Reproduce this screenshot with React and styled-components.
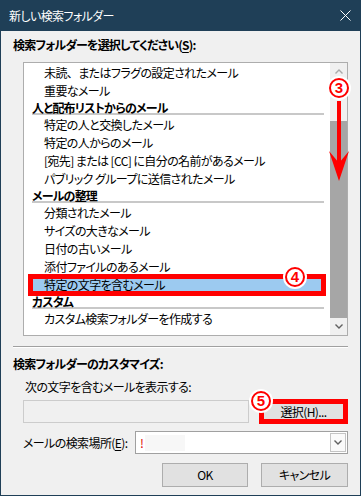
import React from "react";
import styled, { createGlobalStyle } from "styled-components";

const Global = createGlobalStyle`
  html, body { margin: 0; padding: 0; background: #f0f0f0; }
  body {
    font-family: "Noto Sans CJK JP", "Noto Sans", sans-serif;
    font-size: 12px;
    color: #000;
    font-feature-settings: "palt";
    letter-spacing: -0.6px;
  }
  * { box-sizing: border-box; }
`;

const Window = styled.div`
  width: 361px;
  height: 496px;
  border: 1px solid #1f3f57;
  border-top: none;
  background: #f0f0f0;
  display: flex;
  flex-direction: column;
  position: relative;
`;

const TitleBar = styled.div`
  height: 31px;
  flex: none;
  background: #1f3f57;
  color: #fff;
  display: flex;
  align-items: center;
  justify-content: space-between;
  padding: 0 9px 0 8px;
  font-size: 12px;
  line-height: 16px;
`;

const Body = styled.div`
  flex: 1;
  display: flex;
  flex-direction: column;
  padding: 0 12px;
`;

const Label = styled.div`
  height: 16px;
  line-height: 16px;
  white-space: nowrap;
  font-weight: ${(p) => (p.$bold ? 700 : 400)};
  letter-spacing: ${(p) => (p.$bold ? "-0.8px" : "-0.6px")};
  margin-top: ${(p) => p.$mt || 0}px;
  margin-left: ${(p) => p.$ml || 0}px;
`;

const U = styled.span`
  text-decoration: underline;
  text-underline-offset: 2px;
`;

const Wide = styled.span`
  font-feature-settings: normal;
`;

const ListBox = styled.div`
  position: relative;
  margin: 9px 0 0 10px;
  width: 325px;
  height: 274px;
  border: 1px solid #adadad;
  background: #fff;
  display: flex;
  flex: none;
`;

const List = styled.div`
  flex: 1;
  padding-top: 1px;
  display: flex;
  flex-direction: column;
`;

const Item = styled.div`
  position: relative;
  height: 18px;
  line-height: 18px;
  white-space: nowrap;
  padding-left: ${(p) => (p.$selected ? 16 : 20)}px;
  margin: 0 ${(p) => (p.$selected ? 4 : 0)}px;
  background: ${(p) => (p.$selected ? "#9ccaf0" : "transparent")};
`;

const Header = styled.div`
  height: 15px;
  line-height: 15px;
  margin: 0 6px 1px 8px;
  border-bottom: 2px solid #c8c8c8;
  font-weight: 700;
  letter-spacing: -0.8px;
  white-space: nowrap;
`;

const Scrollbar = styled.div`
  width: 17px;
  flex: none;
  background: #f0f0f0;
  display: flex;
  flex-direction: column;
`;

const ScrollButton = styled.div`
  height: 17px;
  flex: none;
  display: flex;
  align-items: center;
  justify-content: center;
`;

const TrackSpace = styled.div`
  height: 41px;
  flex: none;
`;

const Thumb = styled.div`
  flex: 1;
  background: #a6a6a6;
`;

const RedBox = styled.div`
  position: absolute;
  top: ${(p) => p.$t}px;
  left: ${(p) => p.$l}px;
  right: ${(p) => p.$r}px;
  bottom: ${(p) => p.$b}px;
  border: 5px solid #ff0000;
  pointer-events: none;
`;

const Badge = styled.div`
  position: absolute;
  left: ${(p) => p.$x - 12}px;
  top: ${(p) => p.$y - 12}px;
  width: 24px;
  height: 24px;
  border-radius: 50%;
  background: #fff;
  display: flex;
  align-items: center;
  justify-content: center;
  z-index: 2;
`;

const BadgeRing = styled.div`
  width: 20px;
  height: 20px;
  border-radius: 50%;
  border: 2px solid #ff0000;
  color: #ff0000;
  font-family: "Liberation Sans", Arial, sans-serif;
  font-weight: 700;
  font-size: 15px;
  line-height: 16px;
  letter-spacing: 0;
  text-align: center;
`;

const ArrowSvg = styled.svg`
  position: absolute;
  left: ${(p) => p.$x}px;
  top: ${(p) => p.$y}px;
`;

const Separator = styled.div`
  margin-top: 10px;
  height: 2px;
  border-top: 1px solid #a0a0a0;
  border-bottom: 1px solid #fff;
  flex: none;
`;

const Row = styled.div`
  display: flex;
  align-items: center;
  margin-top: ${(p) => p.$mt || 0}px;
  margin-left: ${(p) => p.$ml || 0}px;
  justify-content: ${(p) => p.$justify || "flex-start"};
  gap: ${(p) => p.$gap || 0}px;
`;

const TextBox = styled.div`
  width: 226px;
  height: 23px;
  border: 1px solid #cccccc;
  background: #f0f0f0;
`;

const ButtonWrap = styled.div`
  position: relative;
  margin-left: ${(p) => p.$ml || 0}px;
`;

const Button = styled.div`
  width: ${(p) => p.$w}px;
  height: ${(p) => p.$h}px;
  background: #e1e1e1;
  border: 1px solid #adadad;
  display: flex;
  align-items: center;
  justify-content: center;
  white-space: nowrap;
  line-height: 16px;
`;

const Combo = styled.div`
  margin-left: auto;
  width: 213px;
  height: 23px;
  border: 1px solid #a0a0a0;
  background: #fff;
  display: flex;
  align-items: center;
  padding: 0 1px 0 4px;
`;

const Bang = styled.span`
  color: #e00000;
  font-size: 12px;
  line-height: 16px;
`;

const Redacted = styled.span`
  width: 40px;
  height: 16px;
  background: #f7f7f7;
  margin-left: 2px;
`;

const DropBtn = styled.div`
  margin-left: auto;
  width: 16px;
  height: 19px;
  border: 1px solid #c4c4c4;
  background: #fafafa;
  display: flex;
  align-items: center;
  justify-content: center;
`;

const Chevron = ({ color = "#606060", up = false }) => (
  <svg width="8" height="5" viewBox="0 0 8 5">
    <path
      d={up ? "M0.5 4.5 L4 1 L7.5 4.5" : "M0.5 0.5 L4 4 L7.5 0.5"}
      fill="none"
      stroke={color}
      strokeWidth="1.4"
    />
  </svg>
);

const CloseIcon = () => (
  <svg width="11" height="11" viewBox="0 0 11 11">
    <path d="M0.5 0.5 L10.5 10.5 M10.5 0.5 L0.5 10.5" stroke="#fff" strokeWidth="1" fill="none" />
  </svg>
);

const CircleNum = ({ x, y, n }) => (
  <Badge $x={x} $y={y}>
    <BadgeRing>{n}</BadgeRing>
  </Badge>
);

const rows = [
  { t: <>未読<Wide>、</Wide>またはフラグの設定されたメール</> },
  { t: "重要なメール" },
  { h: "人と配布リストからのメール" },
  { t: "特定の人と交換したメール" },
  { t: "特定の人からのメール" },
  { t: "[宛先] または [CC] に自分の名前があるメール" },
  { t: "パブリック グループに送信されたメール" },
  { h: "メールの整理" },
  { t: "分類されたメール" },
  { t: "サイズの大きなメール" },
  { t: "日付の古いメール" },
  { t: "添付ファイルのあるメール" },
  { t: "特定の文字を含むメール", sel: true },
  { h: "カスタム" },
  { t: "カスタム検索フォルダーを作成する" },
];

export default function App() {
  return (
    <>
      <Global />
      <Window>
        <TitleBar>
          <span>新しい検索フォルダー</span>
          <CloseIcon />
        </TitleBar>
        <Body>
          <Label $bold $mt={6}>
            検索フォルダーを選択してください(<U>S</U>):
          </Label>
          <ListBox>
            <List>
              {rows.map((r, i) =>
                r.h ? (
                  <Header key={i}>{r.h}</Header>
                ) : (
                  <Item key={i} $selected={r.sel}>
                    {r.t}
                    {r.sel && (
                      <>
                        <RedBox $t={-2} $l={0} $r={0} $b={-2} />
                        <CircleNum x={267} y={1} n="4" />
                      </>
                    )}
                  </Item>
                )
              )}
            </List>
            <Scrollbar>
              <ScrollButton>
                <Chevron up color="#a8a8a8" />
              </ScrollButton>
              <TrackSpace />
              <Thumb />
              <ScrollButton>
                <Chevron color="#606060" />
              </ScrollButton>
            </Scrollbar>
            <CircleNum x={315} y={25} n="3" />
            <ArrowSvg $x={304} $y={38} width="22" height="80" viewBox="0 0 22 80">
              <rect x="9" y="0" width="4" height="66" fill="#ff0000" />
              <path d="M1 50 L11 80 L21 50 L11 62 Z" fill="#ff0000" />
            </ArrowSvg>
          </ListBox>
          <Separator />
          <Label $bold $mt={8}>
            検索フォルダーのカスタマイズ:
          </Label>
          <Label $mt={7} $ml={12}>
            次の文字を含むメールを表示する:
          </Label>
          <Row $mt={4} $ml={10}>
            <TextBox />
            <ButtonWrap $ml={10}>
              <Button $w={89} $h={25}>
                選択(<U>H</U>)...
              </Button>
              <RedBox $t={0} $l={0} $r={0} $b={0} />
              <CircleNum x={2} y={2} n="5" />
            </ButtonWrap>
          </Row>
          <Row $mt={7} $ml={10}>
            <Label>
              メールの検索場所(<U>E</U>):
            </Label>
            <Combo>
              <Bang>!</Bang>
              <Redacted />
              <DropBtn>
                <Chevron />
              </DropBtn>
            </Combo>
          </Row>
          <Row $mt={9} $justify="flex-end" $gap={13}>
            <Button $w={86} $h={24}>OK</Button>
            <Button $w={87} $h={24}>キャンセル</Button>
          </Row>
        </Body>
      </Window>
    </>
  );
}
